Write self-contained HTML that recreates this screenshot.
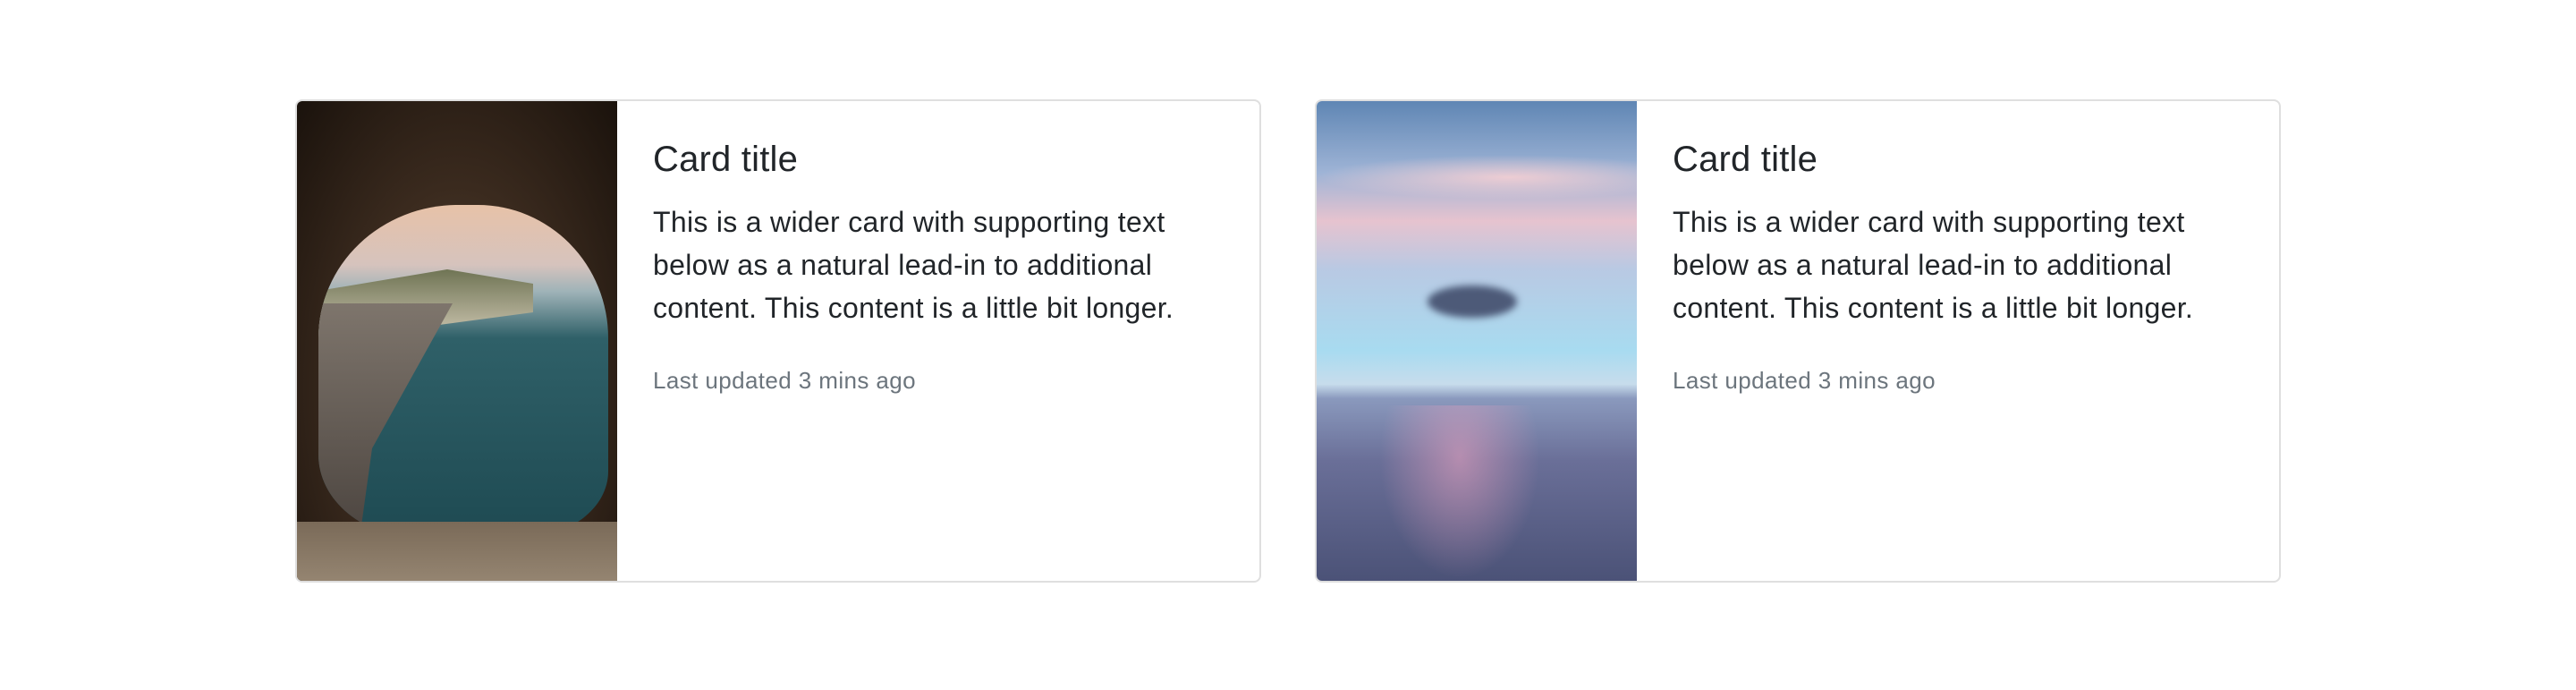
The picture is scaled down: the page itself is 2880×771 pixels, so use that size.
<!DOCTYPE html>
<html><head><meta charset="utf-8"><style>
html,body{margin:0;padding:0;background:#fff;}
body{width:1440px;height:385.5px;zoom:2;overflow:hidden;font-family:"Liberation Sans",sans-serif;color:#212529;position:relative;}
.card{position:absolute;top:55.5px;width:538px;height:268px;border:1px solid rgba(0,0,0,.125);border-radius:4px;overflow:hidden;background:#fff;}
.img{position:absolute;left:0;top:0;width:179px;height:268px;overflow:hidden;}
.body{position:absolute;left:199px;top:20.5px;width:330px;}
h5{margin:0 0 11px;font-size:20px;font-weight:500;line-height:1.2;letter-spacing:0.1px;}
p{margin:0 0 18.5px;font-size:16px;line-height:24px;letter-spacing:0.15px;}
small{font-size:13px;color:#6c757d;line-height:20px;letter-spacing:0.2px;}
</style></head><body>
<div class="card" style="left:165px">
 <div class="img" style="background:radial-gradient(ellipse at 50% 60%,#5a4836 0%,#3a2a1e 50%,#1a120c 100%);">
  <div style="position:absolute;left:12px;top:58px;width:162px;height:186px;border-radius:48% 45% 30% 35%/40% 40% 20% 25%;overflow:hidden;background:linear-gradient(#e7c2a8 0%,#d6c3bd 18%,#9fb3b8 26%,#2f6068 40%,#1e4a52 100%);">
   <div style="position:absolute;left:0;top:36px;width:120px;height:40px;background:linear-gradient(#6f7454,#d2cab6);clip-path:polygon(0 30%,60% 0,100% 20%,100% 60%,0 100%);"></div>
   <div style="position:absolute;left:0;top:55px;width:75px;height:135px;background:linear-gradient(#7e756c,#4a433e);clip-path:polygon(0 0,100% 0,40% 60%,30% 100%,0 100%);"></div>
  </div>
  <div style="position:absolute;left:0;top:235px;width:179px;height:40px;background:linear-gradient(#7a6a58,#9a8a76);"></div>
 </div>
 <div class="body"><h5>Card title</h5><p>This is a wider card with supporting text below as a natural lead-in to additional content. This content is a little bit longer.</p><small>Last updated 3 mins ago</small></div>
</div>
<div class="card" style="left:735px">
 <div class="img" style="background:linear-gradient(#5f86b4 0%,#9fb4d6 15%,#e6c3cf 25%,#b9c9e3 35%,#a8dbf0 52%,#c7dcec 59%,#8a99bd 62%,#6a6f98 75%,#4b5277 100%);">
  <div style="position:absolute;left:0;top:30px;width:179px;height:25px;background:radial-gradient(ellipse at 60% 50%,rgba(255,210,210,.8),rgba(255,210,210,0) 70%);"></div>
  <div style="position:absolute;left:62px;top:103px;width:50px;height:18px;border-radius:50%;background:#4d5a78;filter:blur(2px);"></div>
  <div style="position:absolute;left:35px;top:170px;width:90px;height:97px;background:radial-gradient(ellipse at 50% 30%,rgba(230,160,190,.6),rgba(230,160,190,0) 70%);"></div>
 </div>
 <div class="body"><h5>Card title</h5><p>This is a wider card with supporting text below as a natural lead-in to additional content. This content is a little bit longer.</p><small>Last updated 3 mins ago</small></div>
</div>
</body></html>
